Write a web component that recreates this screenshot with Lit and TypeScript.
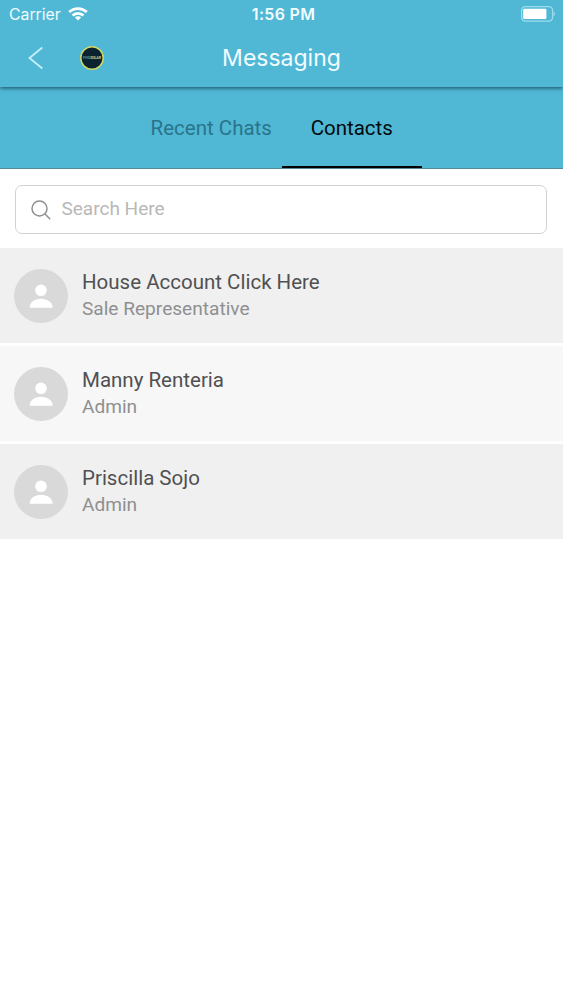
import { LitElement, html, css } from "lit";
import { customElement, property } from "lit/decorators.js";

@customElement("contact-row")
class ContactRow extends LitElement {
  @property() name = "";
  @property() role = "";

  static styles = css`
    :host { display: flex; align-items: center; height: 95px; box-sizing: border-box; padding: 0 14px; gap: 14px; }
    .avatar { width: 54px; height: 54px; flex: none; display: block; }
    .info { display: flex; flex-direction: column; white-space: nowrap; }
    .name { font-size: 20.5px; line-height: 27px; color: #505051; }
    .role { font-size: 19.1px; line-height: 26px; color: #8f8f90; }
  `;

  render() {
    return html`
      <svg class="avatar" viewBox="0 0 54 54">
        <circle cx="27" cy="27" r="27" fill="#d9d9d9" />
        <circle cx="27" cy="21.3" r="5.8" fill="#fff" />
        <path d="M15.6 38.8C15.6 33.2 20.6 29.7 27 29.7S38.6 33.2 38.6 38.8Z" fill="#fff" />
      </svg>
      <div class="info">
        <span class="name">${this.name}</span>
        <span class="role">${this.role}</span>
      </div>
    `;
  }
}

@customElement("app-root")
class AppRoot extends LitElement {
  static styles = css`
    :host { display: block; min-height: 1000px; background: #fff; font-family: Roboto, sans-serif; }
    .top { position: relative; height: 87px; background: #50b8d5; box-shadow: 0 1px 4px rgba(0, 35, 50, 0.75); color: #f2fcff; }
    .status { display: grid; grid-template-columns: 1fr auto 1fr; align-items: center; height: 28px; padding: 0 8px 0 9px; font-family: Inter, sans-serif; }
    .carrier { display: flex; align-items: center; gap: 7px; font-size: 15.8px; }
    .time { font-size: 16px; font-weight: 600; letter-spacing: 0.3px; padding-left: 3px; }
    .battery { justify-self: end; display: block; }
    .nav { display: grid; grid-template-columns: 1fr auto 1fr; align-items: center; height: 59px; }
    .left { display: flex; align-items: center; padding-left: 27px; gap: 36px; }
    .left svg { display: block; }
    .title { font-family: Inter, sans-serif; font-size: 23px; font-weight: 400; margin: 0; }
    .tabs { display: flex; justify-content: center; height: 82px; box-sizing: border-box; background: #50b8d5; border-bottom: 1px solid #58899a; }
    .tab { box-sizing: border-box; width: 140.5px; height: 81px; display: flex; align-items: center; justify-content: center; font-size: 20.5px; color: #2a748a; border-bottom: 2px solid transparent; padding-top: 3px; }
    .tab.active { color: #020a0d; border-bottom-color: #000; }
    .search { display: flex; align-items: center; gap: 10.5px; box-sizing: border-box; height: 49px; margin: 16px 16px 14px 15px; padding: 0 15px; border: 1.3px solid #d1d1d1; border-radius: 7px; color: #b8b8b8; font-size: 19px; }
    .search span { padding-bottom: 2px; }
    .list { display: flex; flex-direction: column; gap: 3px; }
    .odd { background: #f0f0f1; }
    .even { background: #f7f7f8; }
  `;

  render() {
    const contacts = [
      { name: "House Account Click Here", role: "Sale Representative" },
      { name: "Manny Renteria", role: "Admin" },
      { name: "Priscilla Sojo", role: "Admin" },
    ];
    return html`
      <header class="top">
        <div class="status">
          <div class="carrier">
            <span>Carrier</span>
            <svg width="20" height="14" viewBox="0 0 20 14" fill="none" stroke="#fff" stroke-width="2.7">
              <path d="M1.2 5.1C6.2.4 13.8.4 18.8 5.1" />
              <path d="M4.5 8.5C7.6 5.6 12.4 5.6 15.5 8.5" />
              <path d="M10 13.6 6.9 10.4C8.6 8.8 11.4 8.8 13.1 10.4Z" fill="#fff" stroke="none" />
            </svg>
          </div>
          <span class="time">1:56 PM</span>
          <svg class="battery" width="35" height="16" viewBox="0 0 35 16">
            <rect x="1.6" y="0.7" width="31" height="14.4" rx="3.8" fill="none" stroke="#9ddcec" stroke-width="1.3" />
            <rect x="3.2" y="2.7" width="23.2" height="10.3" rx="1" fill="#fff" />
            <path d="M33.7 5.5Q35 6 35 7.8T33.7 10.3Z" fill="#9ddcec" />
          </svg>
        </div>
        <div class="nav">
          <div class="left">
            <svg width="17" height="24" viewBox="0 0 17 24" fill="none" stroke="#c5effa" stroke-width="1.8">
              <path d="M15.3 1.5 2.5 12 15.3 22.5" />
            </svg>
            <svg width="24" height="24" viewBox="0 0 24 24">
              <circle cx="12" cy="12" r="11.2" fill="#0b2330" stroke="#d3d765" stroke-width="1.5" />
              <text x="3" y="13.4" font-family="Roboto, sans-serif" font-size="3.7" font-weight="700" textLength="18" fill="#4d93a0">FIVO<tspan fill="#c9c67a">SOLAR</tspan></text>
            </svg>
          </div>
          <h1 class="title">Messaging</h1>
          <span></span>
        </div>
      </header>
      <nav class="tabs">
        <div class="tab">Recent Chats</div>
        <div class="tab active">Contacts</div>
      </nav>
      <div class="search">
        <svg width="20" height="20" viewBox="0 0 20 20" fill="none" stroke="#909090" stroke-width="1.5">
          <circle cx="8.5" cy="8.5" r="7.5" />
          <path d="M13.8 13.8 19.2 19.2" />
        </svg>
        <span>Search Here</span>
      </div>
      <main class="list">
        ${contacts.map(
          (c, i) => html`<contact-row class=${i % 2 ? "even" : "odd"} .name=${c.name} .role=${c.role}></contact-row>`
        )}
      </main>
    `;
  }
}
